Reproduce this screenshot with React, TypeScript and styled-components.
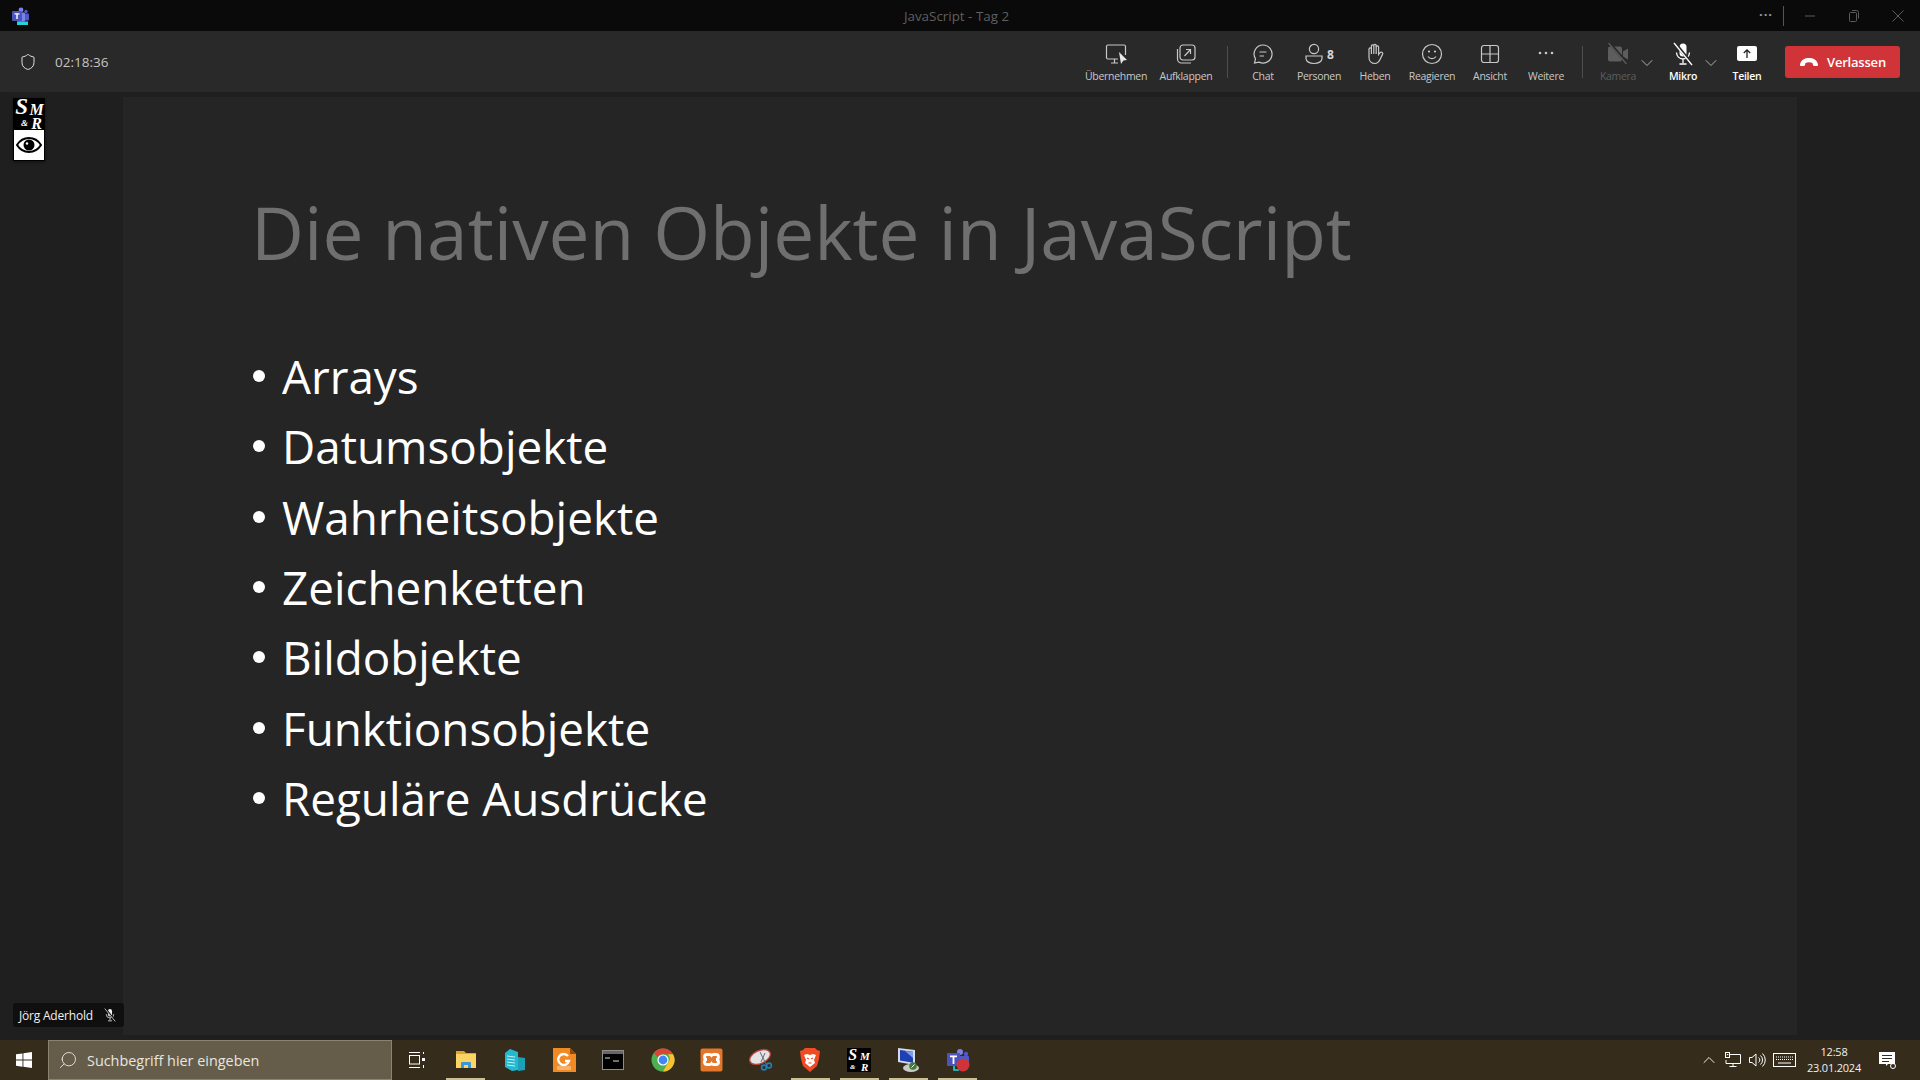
import styled, { createGlobalStyle } from "styled-components";
import { ChevronDown, ChevronUp, Search, Shield } from "lucide-react";

const GlobalStyle = createGlobalStyle`
  html, body {
    margin: 0;
    padding: 0;
    background: #1f1f1f;
  }
  * {
    box-sizing: border-box;
  }
`;

const Page = styled.div`
  width: 1920px;
  height: 1080px;
  display: flex;
  flex-direction: column;
  overflow: hidden;
  font-family: "Open Sans", "Noto Sans", sans-serif;
`;

/* window title bar */
const TitleBar = styled.div`
  height: 31px;
  flex: none;
  background: #0a0a0a;
  display: flex;
  align-items: center;
  padding-left: 12px;
`;

const WindowTitle = styled.div`
  flex: 1;
  text-align: center;
  color: #5f5f5f;
  font-size: 13.4px;
  padding-left: 131px;
`;

const WindowButtons = styled.div`
  display: flex;
  align-items: center;
  height: 100%;
`;

const WindowDots = styled.span`
  width: 28px;
  color: #9a9a9a;
  font-size: 13px;
  font-weight: 700;
  letter-spacing: 1px;
  text-align: center;
  margin: 0 3px 4px 0;
`;

const WindowDivider = styled.div`
  width: 1px;
  height: 20px;
  background: #555;
  margin-right: 4px;
`;

const WindowButton = styled.div`
  width: 44px;
  height: 100%;
  display: flex;
  align-items: center;
  justify-content: center;
`;

/* meeting toolbar */
const Toolbar = styled.div`
  height: 61px;
  flex: none;
  background: #292929;
  display: flex;
  align-items: center;
  padding: 0 20px 0 19px;
`;

const Timer = styled.div`
  color: #c4c4c4;
  font-size: 13.5px;
  margin-left: 18px;
`;

const ToolbarSpacer = styled.div`
  flex: 1;
`;

const ToolButton = styled.div<{ $width: number; $bright?: boolean; $muted?: boolean }>`
  width: ${(p) => p.$width}px;
  height: 61px;
  display: flex;
  flex-direction: column;
  align-items: center;
  padding-top: 11px;
  flex: none;
  color: ${(p) => (p.$muted ? "#5d5d5d" : p.$bright ? "#ffffff" : "#c8c8c8")};
  font-weight: ${(p) => (p.$bright ? 600 : 400)};
`;

const ToolIcon = styled.div`
  height: 24px;
  display: flex;
  align-items: center;
  justify-content: center;
`;

const ToolLabel = styled.div`
  font-size: 10.5px;
  line-height: 14px;
  margin-top: 3px;
  white-space: nowrap;
  letter-spacing: -0.3px;
`;

const PeopleCount = styled.span`
  font-size: 12px;
  font-weight: 700;
  color: #d6d6d6;
  margin-left: 3px;
`;

const ToolDivider = styled.div<{ $left: number; $right: number }>`
  width: 1px;
  height: 32px;
  background: #4d4d4d;
  margin: 0 ${(p) => p.$right}px 0 ${(p) => p.$left}px;
  flex: none;
`;

const Caret = styled.div<{ $width: number }>`
  width: ${(p) => p.$width}px;
  padding-top: 3px;
  color: #c8c8c8;
  display: flex;
  justify-content: flex-start;
  flex: none;

  svg {
    flex: none;
  }
`;

const LeaveButton = styled.div`
  width: 115px;
  height: 32px;
  background: #d13438;
  border-radius: 3px;
  color: #fff;
  font-size: 13px;
  font-weight: 600;
  display: flex;
  align-items: center;
  justify-content: center;
  gap: 8px;
  margin-left: 12px;
  letter-spacing: -0.2px;
`;

/* stage */
const Stage = styled.div`
  flex: 1;
  display: flex;
  padding: 5px 0;
  background: #1f1f1f;
  position: relative;
`;

const Gutter = styled.div`
  width: 123px;
  flex: none;
  padding: 1px 0 0 13px;
`;

const PresenterLogo = styled.div`
  width: 32px;
  height: 63px;
  background: #000;
  display: flex;
  flex-direction: column;
  align-items: center;
  box-shadow: 0 1px 3px rgba(0, 0, 0, 0.5);
`;

const LogoText = styled.div`
  height: 32px;
  width: 100%;
  color: #fff;
  font-family: "Liberation Serif", serif;
  font-style: italic;
  font-weight: 700;
  display: grid;
  grid-template-columns: 15px 17px;
  grid-template-rows: 17px 15px;
  text-align: center;
`;

const LogoS = styled.span`
  font-size: 23px;
  line-height: 18px;
  text-align: right;
`;
const LogoM = styled.span`
  font-size: 16px;
  line-height: 23px;
`;
const LogoAmp = styled.span`
  font-size: 9px;
  line-height: 17px;
  text-align: right;
`;
const LogoR = styled.span`
  font-size: 16px;
  line-height: 18px;
`;

const LogoEye = styled.div`
  width: 30px;
  height: 30px;
  background: #fff;
  display: flex;
  align-items: center;
  justify-content: center;
`;

const Slide = styled.div`
  width: 1674px;
  flex: none;
  background: #252525;
  padding: 91px 0 0 129px;
`;

const SlideTitle = styled.h1`
  margin: 0 0 0 -1px;
  font-size: 73px;
  line-height: 88px;
  font-weight: 400;
  color: #6f6f6f;
  white-space: nowrap;
`;

const BulletList = styled.ul`
  list-style: none;
  margin: 65px 0 0 0;
  padding: 0;
`;

const Bullet = styled.li`
  height: 70.3px;
  display: flex;
  align-items: center;
  color: #fff;
  font-size: 45.8px;
  white-space: nowrap;

  &::before {
    content: "";
    width: 12px;
    height: 12px;
    border-radius: 50%;
    background: #fff;
    margin: 0 17px 0 1px;
    flex: none;
  }
`;

const NameTag = styled.div`
  position: absolute;
  left: 13px;
  bottom: 13px;
  height: 24px;
  width: 111px;
  background: #0f0f0f;
  border-radius: 3px;
  color: #f0f0f0;
  font-size: 12px;
  display: flex;
  align-items: center;
  padding-left: 6px;
  gap: 10px;
  letter-spacing: -0.2px;
`;

/* windows taskbar */
const Taskbar = styled.div`
  height: 40px;
  flex: none;
  background: #352c1c;
  display: flex;
  align-items: stretch;
`;

const StartButton = styled.div`
  width: 48px;
  display: flex;
  align-items: center;
  justify-content: center;
`;

const SearchBox = styled.div`
  width: 344px;
  background: #655d49;
  border: 1px solid #8a836e;
  display: flex;
  align-items: center;
  color: #e8e6e0;
  font-size: 14.4px;
  padding-left: 9px;
  gap: 9px;
`;

const MirroredSearch = styled(Search)`
  transform: scaleX(-1);
`;

const AppSlot = styled.div<{ $running?: boolean }>`
  width: 49.2px;
  flex: none;
  display: flex;
  align-items: center;
  justify-content: center;
  position: relative;

  &::after {
    content: "";
    display: ${(p) => (p.$running ? "block" : "none")};
    position: absolute;
    left: 5px;
    right: 5px;
    bottom: 0;
    height: 2px;
    background: #cbbf95;
  }
`;

const Tray = styled.div`
  margin-left: auto;
  display: flex;
  align-items: center;
  color: #fff;
`;

const TrayIcon = styled.div<{ $width: number }>`
  width: ${(p) => p.$width}px;
  display: flex;
  justify-content: center;
  align-items: center;
`;

const Clock = styled.div`
  width: 66px;
  text-align: center;
  color: #f0f0f0;
  font-size: 11px;
  line-height: 16px;
  letter-spacing: -0.2px;
`;

const Notification = styled.div`
  width: 40px;
  display: flex;
  align-items: center;
  justify-content: center;
  margin-right: 13px;
`;

const TeamsIcon = ({ size = 18 }: { size?: number }) => (
  <svg width={size} height={size} viewBox="0 0 18 18">
    <circle cx="9" cy="3" r="2.400" fill="#7b83eb" />
    <circle cx="14" cy="4.500" r="1.700" fill="#5059c9" />
    <rect x="10" y="6.500" width="7" height="7" rx="1" fill="#5059c9" />
    <rect x="5" y="5.500" width="8" height="9" rx="1" fill="#7b83eb" />
    <rect x="0" y="4" width="10" height="10" rx="1" fill="#4b53bc" />
    <path d="M2.500 6.200h5v1.300H5.700v4.600H4.300V7.500H2.500z" fill="#fff" />
    <rect x="5" y="14.500" width="11" height="3.500" fill="#27d2d6" />
  </svg>
);

const WinMin = () => (
  <svg width="12" height="12" viewBox="0 0 12 12">
    <path d="M1 6h10" stroke="#5c5c5c" />
  </svg>
);
const WinRestore = () => (
  <svg width="12" height="14" viewBox="0 0 12 14">
    <rect x="1.500" y="3.500" width="7" height="9" rx="1" fill="none" stroke="#5c5c5c" />
    <path d="M4 1.500h4.500a2 2 0 0 1 2 2v6" fill="none" stroke="#5c5c5c" />
  </svg>
);
const WinClose = () => (
  <svg width="12" height="12" viewBox="0 0 12 12">
    <path d="M0.500 0.500l11 11M11.500 0.500l-11 11" stroke="#5c5c5c" />
  </svg>
);

const stroke = { fill: "none", stroke: "currentColor", strokeWidth: 1.2 };

const TakeControlIcon = () => (
  <svg width="24" height="24" viewBox="0 0 24 24" {...stroke}>
    <path d="M14 17H4a1.500 1.500 0 0 1-1.500-1.500v-11A1.500 1.500 0 0 1 4 3h16a1.500 1.500 0 0 1 1.500 1.500V13" />
    <path d="M7 21h7M10.500 17v4" />
    <path d="M15 10l8 8-3.600.4L17 22z" fill="#e8e8e8" stroke="none" />
  </svg>
);
const PopOutIcon = () => (
  <svg width="22" height="22" viewBox="0 0 22 22" {...stroke}>
    <rect x="5" y="2" width="15" height="15" rx="3" />
    <path d="M2.500 6v10a4 4 0 0 0 4 4H16" />
    <path d="M9.500 13L15.500 6.500M11 6.500h4.500V11" />
  </svg>
);
const ChatIcon = () => (
  <svg width="22" height="22" viewBox="0 0 22 22" {...stroke}>
    <path d="M11 2a9 9 0 1 1-3.900 17.100L2.500 20l1-4.200A9 9 0 0 1 11 2z" />
    <path d="M7.500 9h7M7.500 13h4.500" />
  </svg>
);
const PeopleIcon = () => (
  <svg width="20" height="22" viewBox="0 0 20 22" {...stroke}>
    <circle cx="10" cy="6" r="4.600" />
    <path d="M2 13h16v2.500c0 3-3.500 5-8 5s-8-2-8-5z" />
  </svg>
);
const HandIcon = () => (
  <svg width="20" height="22" viewBox="0 0 20 22" {...stroke}>
    <path d="M4 12V6a1.200 1.200 0 0 1 2.400 0v-3a1.200 1.200 0 0 1 2.400 0V2.500a1.200 1.200 0 0 1 2.400 0V4a1.200 1.200 0 0 1 2.400 0v7.500l1.600-2a1.500 1.500 0 0 1 2.300 1.900L14.500 17.500a5.500 5.500 0 0 1-4.500 3c-3.500 0-6-2.500-6-6z" />
    <path d="M6.400 6v5M8.800 3v8M11.200 3v8" />
  </svg>
);
const SmileIcon = () => (
  <svg width="22" height="22" viewBox="0 0 22 22" {...stroke}>
    <circle cx="11" cy="11" r="9.500" />
    <path d="M7 13.500c1 1.500 2.400 2.200 4 2.200s3-.7 4-2.200" />
    <circle cx="8" cy="8.500" r="1.100" fill="currentColor" stroke="none" />
    <circle cx="14" cy="8.500" r="1.100" fill="currentColor" stroke="none" />
  </svg>
);
const GridIcon = () => (
  <svg width="20" height="20" viewBox="0 0 20 20" {...stroke}>
    <rect x="1.500" y="1.500" width="17" height="17" rx="2.500" />
    <path d="M10 1.500v17M1.500 10h17" />
  </svg>
);
const DotsIcon = () => (
  <svg width="20" height="20" viewBox="0 0 20 20" fill="currentColor">
    <circle cx="4" cy="9" r="1.300" />
    <circle cx="10" cy="9" r="1.300" />
    <circle cx="16" cy="9" r="1.300" />
  </svg>
);
const CameraOffIcon = () => (
  <svg width="22" height="22" viewBox="0 0 22 22">
    <rect x="1" y="3.500" width="14" height="15" rx="2" fill="#5d5d5d" />
    <path d="M16 8.500l5-3v11l-5-3z" fill="#5d5d5d" />
    <path d="M2.500 0l18 21" stroke="#292929" strokeWidth="3" />
    <path d="M1.500 0l18 21" stroke="#5d5d5d" strokeWidth="1.200" />
  </svg>
);
const MicOffIcon = ({ size = 24, bg = "#292929" }: { size?: number; bg?: string }) => (
  <svg width={size} height={size} viewBox="0 0 24 24">
    <rect x="8.500" y="1.500" width="7" height="13" rx="3.500" fill="currentColor" />
    <path d="M5.500 10.500a6.500 6.500 0 0 0 13 0M12 17v4M8.500 22h7" fill="none" stroke="currentColor" strokeWidth="1.300" />
    <path d="M4 1l17 21" stroke={bg} strokeWidth="3" />
    <path d="M3 1l18 22" stroke="currentColor" strokeWidth="1.300" />
  </svg>
);
const ShareIcon = () => (
  <svg width="22" height="18" viewBox="0 0 22 18">
    <rect x="1" y="1" width="20" height="15" rx="2" fill="#fff" />
    <path d="M11 13V5M7.800 8L11 4.800 14.200 8" fill="none" stroke="#222" strokeWidth="1.300" />
  </svg>
);
const HangUpIcon = () => (
  <svg width="20" height="12" viewBox="0 0 20 12">
    <path d="M1 8.500C2 3.500 6 2 10 2s8 1.500 9 6.500c.2 1-.5 1.500-1.200 1.500h-2.600c-.8 0-1.200-.5-1.300-1.200L13.500 7c-1-.6-2.200-.8-3.500-.8s-2.500.2-3.500.8l-.4 1.800c-.1.700-.5 1.200-1.300 1.200H2.200C1.500 10 .8 9.500 1 8.500z" fill="#fff" />
  </svg>
);

const EyeIcon = () => (
  <svg width="26" height="18" viewBox="0 0 26 18">
    <path d="M1 9c3-4.800 7-7 12-7s9 2.200 12 7c-3 4.800-7 7-12 7S4 13.800 1 9z" fill="none" stroke="#000" strokeWidth="2" />
    <circle cx="13" cy="9" r="5.500" fill="#000" />
    <circle cx="11" cy="7.500" r="1.200" fill="#fff" />
  </svg>
);

const WindowsLogo = () => (
  <svg width="16" height="16" viewBox="0 0 16 16" fill="#fff">
    <path d="M0 2.300l6.500-.9v6.200H0zM7.400 1.300L16 0v7.600H7.400zM0 8.500h6.500v6.200L0 13.800zM7.400 8.500H16V16l-8.600-1.200z" />
  </svg>
);
const TaskViewIcon = () => (
  <svg width="16" height="16" viewBox="0 0 16 16" fill="none" stroke="#fff">
    <path d="M0 .5h11M0 15.500h11" />
    <rect x=".5" y="3.500" width="10" height="8.500" />
    <path d="M14.500 0v2M14.500 13v3" />
    <rect x="13" y="6" width="3" height="3" fill="#fff" stroke="none" />
  </svg>
);
const ExplorerIcon = () => (
  <svg width="22" height="20" viewBox="0 0 22 20">
    <path d="M1 1h8l2 2h10v5H1z" fill="#e0a52c" />
    <rect x="1" y="4" width="20" height="14" fill="#fcd462" />
    <path d="M6 18v-5a1 1 0 0 1 1-1h8a1 1 0 0 1 1 1v5h-3v-3H9v3z" fill="#3a96dd" />
  </svg>
);
const BuildingIcon = () => (
  <svg width="22" height="24" viewBox="0 0 22 24">
    <path d="M1 5l5-4 8 3v18l-6 1-7-4z" fill="#25b9cf" />
    <path d="M14 9l7 1v12l-7 1z" fill="#1aa0b8" />
    <path d="M3 8l8 1M3 11l8 1M3 14l8 1M3 17l8 1" stroke="#bff1f5" strokeWidth="1" />
  </svg>
);
const FoxitIcon = () => (
  <svg width="23" height="24" viewBox="0 0 23 24">
    <path d="M0 0h17l6 6v18H0z" fill="#f28a24" />
    <path d="M17 0l6 6h-6z" fill="#8a4a10" />
    <path d="M15 8a5.500 5.500 0 1 0 1 5h-4" fill="none" stroke="#fff" strokeWidth="2.400" />
    <rect x="4" y="18" width="14" height="4" fill="#f6b26b" />
  </svg>
);
const TerminalIcon = () => (
  <svg width="22" height="20" viewBox="0 0 22 20">
    <rect x=".5" y=".5" width="21" height="19" fill="#000" stroke="#8d8d8d" />
    <rect x="1" y="1" width="20" height="3" fill="#666" />
    <path d="M3 8h5M11 11h6" stroke="#ddd" strokeWidth="1.200" />
  </svg>
);
const ChromeIcon = () => (
  <svg width="24" height="24" viewBox="0 0 24 24">
    <circle cx="12" cy="12" r="11.500" fill="#4caf50" />
    <path d="M12 .5a11.500 11.500 0 0 1 10 5.750H12a5.750 5.750 0 0 0-5.200 3.300L2.800 5A11.500 11.500 0 0 1 12 .5z" fill="#db4437" />
    <path d="M22 6.250A11.500 11.500 0 0 1 12 23.500l5-8.700a5.750 5.750 0 0 0 0-8.550z" fill="#fbc02d" />
    <circle cx="12" cy="12" r="5.600" fill="#fff" />
    <circle cx="12" cy="12" r="4.400" fill="#4285f4" />
  </svg>
);
const XamppIcon = () => (
  <svg width="23" height="24" viewBox="0 0 23 24">
    <rect x=".5" y=".5" width="22" height="23" rx="2" fill="#e2762b" />
    <path d="M7 6.500h2.500a2.500 2.500 0 0 1 2 1 2.500 2.500 0 0 1 2-1H16a2.500 2.500 0 0 1 0 5 2.500 2.500 0 0 1 0 5h-2.500a2.500 2.500 0 0 1-2-1 2.500 2.500 0 0 1-2 1H7a2.500 2.500 0 0 1 0-5 2.500 2.500 0 0 1 0-5z" fill="none" stroke="#fff" strokeWidth="2.800" />
  </svg>
);
const SnipIcon = () => (
  <svg width="24" height="24" viewBox="0 0 24 24">
    <ellipse cx="11" cy="9" rx="11" ry="6.500" transform="rotate(-25 11 9)" fill="#e4e4e4" stroke="#b5403c" strokeWidth="1.300" />
    <path d="M11 4l6 12M16 5l-4 9" stroke="#667" strokeWidth="1" />
    <circle cx="15" cy="19.500" r="2.400" fill="none" stroke="#1f7fb8" strokeWidth="1.600" />
    <circle cx="20" cy="17.500" r="2.400" fill="none" stroke="#1f7fb8" strokeWidth="1.600" />
  </svg>
);
const BraveIcon = () => (
  <svg width="20" height="24" viewBox="0 0 20 24">
    <path d="M5 0h10l2 2 3 1-1 8-2 7-7 6-7-6-2-7-1-8 3-1z" fill="#f04b23" />
    <path d="M4 7l3-1 3 1 3-1 3 1-2 5 1 3-5 4-5-4 1-3z" fill="#fff" />
    <path d="M7 10l2 1M13 10l-2 1M8.500 15h3" stroke="#f04b23" strokeWidth="1.200" />
  </svg>
);
const RemoteIcon = () => (
  <svg width="24" height="26" viewBox="0 0 24 26">
    <path d="M2 1l17 2v15L2 15z" fill="#d5dce6" />
    <path d="M4 3l13 1.700v11L4 13.500z" fill="#1f3fb5" />
    <path d="M9 4l8 1v6z" fill="#7f9be8" />
    <ellipse cx="15" cy="21" rx="8" ry="4" fill="#c9cbc4" />
    <circle cx="17" cy="19" r="3.800" fill="#3f7d3a" />
    <path d="M15.500 20.500l3-3" stroke="#fff" />
  </svg>
);
const TeamsRecording = () => (
  <svg width="26" height="26" viewBox="0 0 26 26">
    <circle cx="15" cy="5" r="3" fill="#7b83eb" />
    <circle cx="21" cy="7" r="2.200" fill="#5059c9" />
    <rect x="13" y="9" width="11" height="10" rx="1" fill="#5059c9" />
    <rect x="2" y="6" width="13" height="13" rx="1" fill="#4b53bc" />
    <path d="M5 8.500h7v1.700H9.400V17H7.600v-6.800H5z" fill="#fff" />
    <path d="M9 19v4h5" fill="none" stroke="#27d2d6" strokeWidth="1.600" />
    <circle cx="18" cy="18" r="6.500" fill="#d13438" />
  </svg>
);

const NetworkIcon = () => (
  <svg width="16" height="16" viewBox="0 0 16 16" fill="none" stroke="#fff">
    <path d="M5 2.500h10.500v9H1V8M8 11.500v3M4.500 14.500h7" />
    <rect x=".5" y=".5" width="4" height="5" />
    <rect x="1.800" y="2" width="1.500" height="1.200" fill="#fff" stroke="none" />
  </svg>
);
const VolumeIcon = () => (
  <svg width="17" height="16" viewBox="0 0 17 16" fill="none" stroke="#fff">
    <path d="M.5 5.500h2.500L7 2v12l-4-3.500H.5zM9.500 5.500a3 3 0 0 1 0 5M11.500 3.500a6 6 0 0 1 0 9M13.500 1.500a9 9 0 0 1 0 13" />
  </svg>
);
const KeyboardIcon = () => (
  <svg width="23" height="14" viewBox="0 0 23 14" fill="none" stroke="#fff">
    <rect x=".5" y=".5" width="22" height="13" />
    <path d="M3 4h17M3 6.500h17" strokeDasharray="1 1" />
    <path d="M5 10h13" />
  </svg>
);
const NotificationIcon = () => (
  <svg width="17" height="17" viewBox="0 0 17 17">
    <path d="M0 0h16v12H9l-2 2v-2H0z" fill="#fff" />
    <path d="M3 3.500h10M3 6.500h10M3 9.500h7" stroke="#352c1c" />
    <circle cx="14" cy="14" r="2.500" fill="none" stroke="#fff" />
  </svg>
);

const bullets = [
  "Arrays",
  "Datumsobjekte",
  "Wahrheitsobjekte",
  "Zeichenketten",
  "Bildobjekte",
  "Funktionsobjekte",
  "Reguläre Ausdrücke",
];

const SmallSmrLogo = styled(LogoText)`
  width: 24px;
  height: 24px;
  background: #000;
  grid-template-columns: 11px 13px;
  grid-template-rows: 12px 12px;
`;
const SmallS = styled.span`
  font-size: 16px;
  line-height: 13px;
`;
const SmallM = styled.span`
  font-size: 11px;
  line-height: 16px;
`;
const SmallAmp = styled.span`
  font-size: 7px;
  line-height: 14px;
`;
const SmallR = styled.span`
  font-size: 11px;
  line-height: 14px;
`;

export default function App() {
  return (
    <Page>
      <GlobalStyle />
      <TitleBar>
        <TeamsIcon />
        <WindowTitle>JavaScript - Tag 2</WindowTitle>
        <WindowButtons>
          <WindowDots>···</WindowDots>
          <WindowDivider />
          <WindowButton><WinMin /></WindowButton>
          <WindowButton><WinRestore /></WindowButton>
          <WindowButton><WinClose /></WindowButton>
        </WindowButtons>
      </TitleBar>

      <Toolbar>
        <Shield size={18} color="#e4e4e4" strokeWidth={1.3} />
        <Timer>02:18:36</Timer>
        <ToolbarSpacer />
        <ToolButton $width={74}>
          <ToolIcon><TakeControlIcon /></ToolIcon>
          <ToolLabel>Übernehmen</ToolLabel>
        </ToolButton>
        <ToolButton $width={66}>
          <ToolIcon><PopOutIcon /></ToolIcon>
          <ToolLabel>Aufklappen</ToolLabel>
        </ToolButton>
        <ToolDivider $left={8} $right={8} />
        <ToolButton $width={54}>
          <ToolIcon><ChatIcon /></ToolIcon>
          <ToolLabel>Chat</ToolLabel>
        </ToolButton>
        <ToolButton $width={58}>
          <ToolIcon><PeopleIcon /><PeopleCount>8</PeopleCount></ToolIcon>
          <ToolLabel>Personen</ToolLabel>
        </ToolButton>
        <ToolButton $width={54}>
          <ToolIcon><HandIcon /></ToolIcon>
          <ToolLabel>Heben</ToolLabel>
        </ToolButton>
        <ToolButton $width={60}>
          <ToolIcon><SmileIcon /></ToolIcon>
          <ToolLabel>Reagieren</ToolLabel>
        </ToolButton>
        <ToolButton $width={56}>
          <ToolIcon><GridIcon /></ToolIcon>
          <ToolLabel>Ansicht</ToolLabel>
        </ToolButton>
        <ToolButton $width={56}>
          <ToolIcon><DotsIcon /></ToolIcon>
          <ToolLabel>Weitere</ToolLabel>
        </ToolButton>
        <ToolDivider $left={8} $right={16} />
        <ToolButton $width={38} $muted>
          <ToolIcon><CameraOffIcon /></ToolIcon>
          <ToolLabel>Kamera</ToolLabel>
        </ToolButton>
        <Caret $width={28}><ChevronDown size={20} strokeWidth={1} /></Caret>
        <ToolButton $width={36} $bright>
          <ToolIcon><MicOffIcon /></ToolIcon>
          <ToolLabel>Mikro</ToolLabel>
        </ToolButton>
        <Caret $width={20}><ChevronDown size={20} strokeWidth={1} /></Caret>
        <ToolButton $width={52} $bright>
          <ToolIcon><ShareIcon /></ToolIcon>
          <ToolLabel>Teilen</ToolLabel>
        </ToolButton>
        <LeaveButton>
          <HangUpIcon />
          Verlassen
        </LeaveButton>
      </Toolbar>

      <Stage>
        <Gutter>
          <PresenterLogo>
            <LogoText>
              <LogoS>S</LogoS>
              <LogoM>M</LogoM>
              <LogoAmp>&amp;</LogoAmp>
              <LogoR>R</LogoR>
            </LogoText>
            <LogoEye><EyeIcon /></LogoEye>
          </PresenterLogo>
        </Gutter>
        <Slide>
          <SlideTitle>Die nativen Objekte in JavaScript</SlideTitle>
          <BulletList>
            {bullets.map((item) => (
              <Bullet key={item}>{item}</Bullet>
            ))}
          </BulletList>
        </Slide>
        <NameTag>
          Jörg Aderhold
          <MicOffIcon size={14} bg="#0f0f0f" />
        </NameTag>
      </Stage>

      <Taskbar>
        <StartButton><WindowsLogo /></StartButton>
        <SearchBox>
          <MirroredSearch size={20} color="#e8e6e0" strokeWidth={1.1} />
          Suchbegriff hier eingeben
        </SearchBox>
        <AppSlot><TaskViewIcon /></AppSlot>
        <AppSlot $running><ExplorerIcon /></AppSlot>
        <AppSlot><BuildingIcon /></AppSlot>
        <AppSlot><FoxitIcon /></AppSlot>
        <AppSlot><TerminalIcon /></AppSlot>
        <AppSlot><ChromeIcon /></AppSlot>
        <AppSlot><XamppIcon /></AppSlot>
        <AppSlot><SnipIcon /></AppSlot>
        <AppSlot $running><BraveIcon /></AppSlot>
        <AppSlot $running>
          <SmallSmrLogo>
            <SmallS>S</SmallS>
            <SmallM>M</SmallM>
            <SmallAmp>&amp;</SmallAmp>
            <SmallR>R</SmallR>
          </SmallSmrLogo>
        </AppSlot>
        <AppSlot $running><RemoteIcon /></AppSlot>
        <AppSlot $running><TeamsRecording /></AppSlot>
        <Tray>
          <TrayIcon $width={20}><ChevronUp size={22} strokeWidth={1.1} /></TrayIcon>
          <TrayIcon $width={28}><NetworkIcon /></TrayIcon>
          <TrayIcon $width={20}><VolumeIcon /></TrayIcon>
          <TrayIcon $width={34}><KeyboardIcon /></TrayIcon>
          <Clock>
            12:58
            <br />
            23.01.2024
          </Clock>
          <Notification><NotificationIcon /></Notification>
        </Tray>
      </Taskbar>
    </Page>
  );
}
